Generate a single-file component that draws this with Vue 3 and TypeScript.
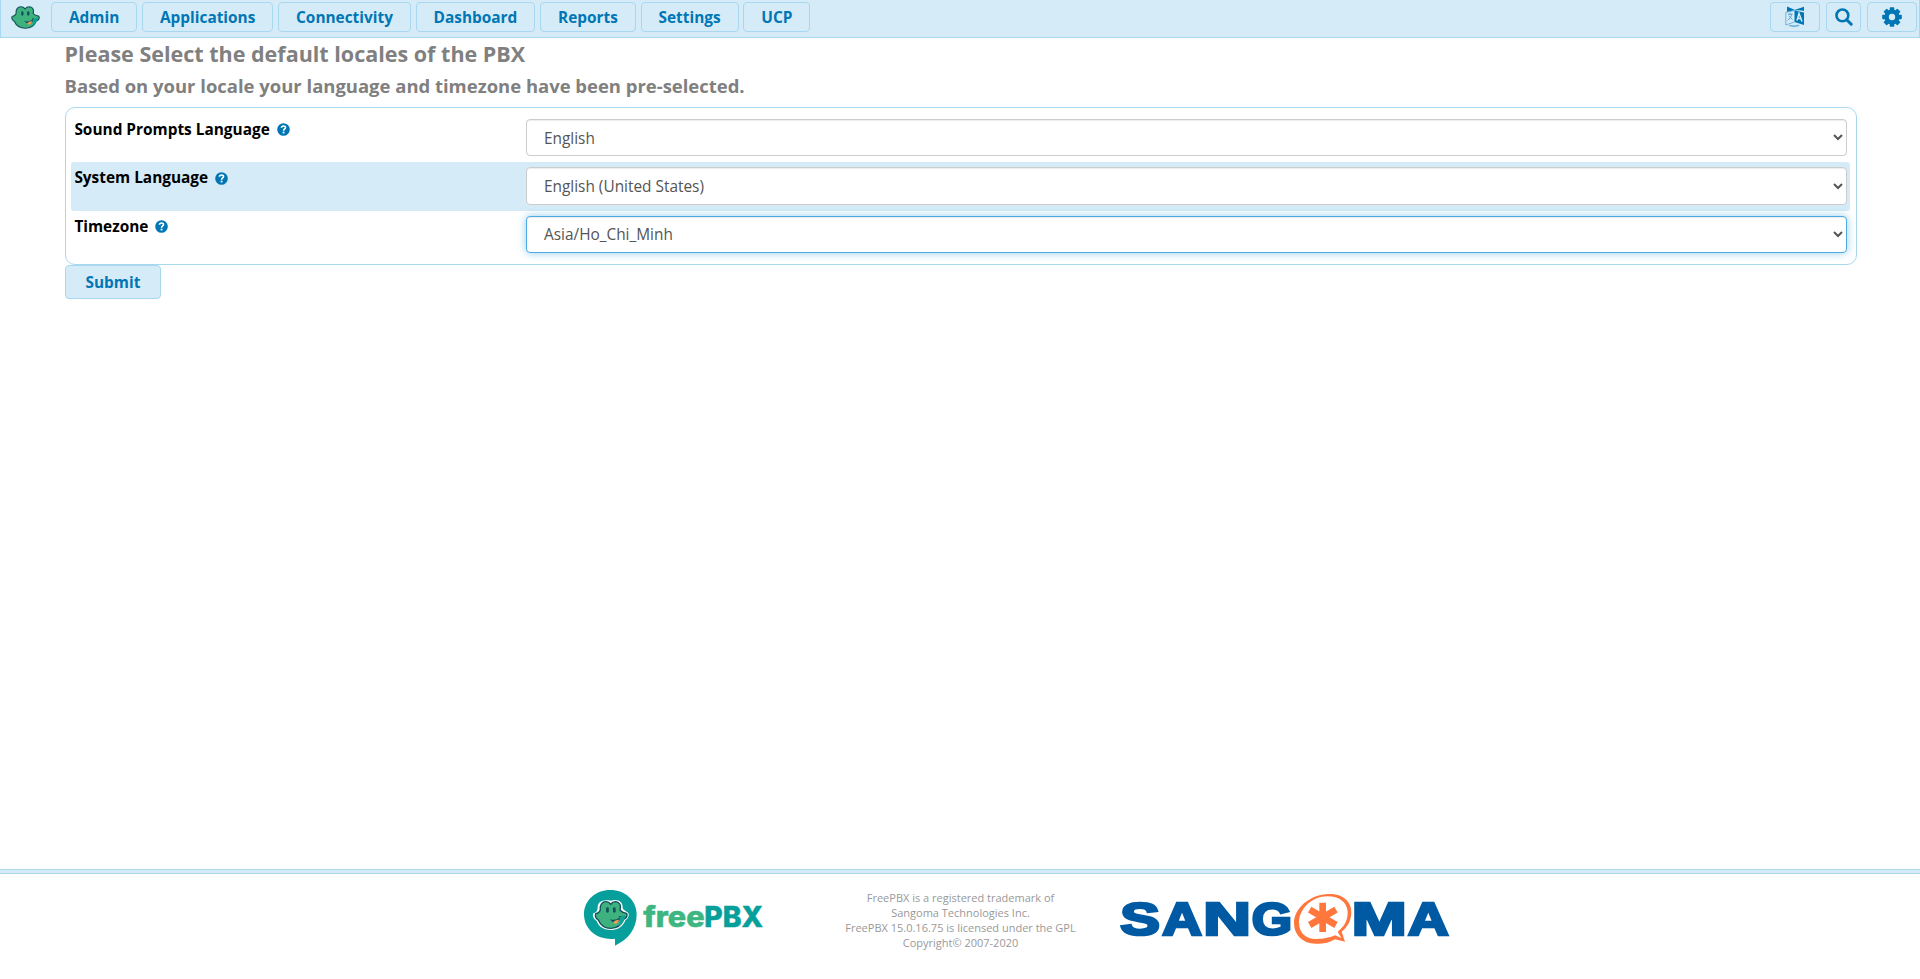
<script setup lang="ts">
import { ref } from 'vue'

interface Field {
  id: string
  label: string
  options: string[]
  focused: boolean
}

const menu: string[] = ['Admin', 'Applications', 'Connectivity', 'Dashboard', 'Reports', 'Settings', 'UCP']

const fields = ref<Field[]>([
  { id: 'sound', label: 'Sound Prompts Language', options: ['English'], focused: false },
  { id: 'system', label: 'System Language', options: ['English (United States)'], focused: false },
  { id: 'timezone', label: 'Timezone', options: ['Asia/Ho_Chi_Minh'], focused: true },
])

const legal: string[] = [
  'FreePBX is a registered trademark of',
  'Sangoma Technologies Inc.',
  'FreePBX 15.0.16.75 is licensed under the GPL',
  'Copyright© 2007-2020',
]
</script>

<template>
  <div class="page">
    <svg class="defs" width="0" height="0" aria-hidden="true">
      <symbol id="frog" viewBox="73 122 101 86">
        <path d="M91 150C89 134 97 125 107 125C115 125 119 128 122 133C125 128 130 125 138 125C149 126 154 137 150 150C156 158 164 159 170 160C173 169 168 175 161 178C155 194 142 205 123 205C103 205 91 195 85 180C77 175 74 169 77 161C84 160 89 156 91 150Z" fill="#3db27e" stroke="#12515c" stroke-width="4" stroke-linejoin="round" />
        <path d="M149 170L165 166C165 178 158 194 145 199C152 190 151 180 149 170Z" fill="#0ea293" />
        <rect x="108.5" y="142" width="8" height="16" rx="4" fill="#12515c" />
        <rect x="129" y="142" width="8" height="16" rx="4" fill="#12515c" />
        <path d="M119 177Q136 184 150 172Q150 187 136 190Q126 187 119 177Z" fill="#12515c" />
        <path d="M129 187Q136 178 147 179Q144 191 135 192Z" fill="#f59a57" />
        <path d="M146 171L153 169" stroke="#12515c" stroke-width="3" />
      </symbol>
    </svg>

    <header class="topbar">
      <svg class="brand" viewBox="73 122 101 86" preserveAspectRatio="none"><use href="#frog" x="73" y="122" width="101" height="86" /></svg>
      <nav class="menu">
        <button v-for="item in menu" :key="item" class="btn">{{ item }}</button>
      </nav>
      <div class="tools">
        <button class="btn tool wide" aria-label="Language">
          <svg width="20" height="22" viewBox="0 0 20 22">
            <path d="M2 .5V6L10 4ZM9.5 4L19 .8V5L17 4.5Z" fill="#0076b5" />
            <path d="M9.5 4.5L19 6.5V19L9.5 16Z" fill="#0076b5" />
            <path d="M.8 6.5L9.5 4.5V16L.8 19Z" fill="#d5ebf7" stroke="#5aa7d2" stroke-width=".8" />
            <path d="M3 8.5L7.5 8M5 6.8V8.2M6.8 8.4Q6 12 2.6 14.5M3.8 10L7.6 13.5" fill="none" stroke="#4d9fce" stroke-width=".9" />
            <path d="M12 14.5L14 7.5L17 15.5M12.8 12.2L15.8 12.8" fill="none" stroke="#d5ebf7" stroke-width="1.5" />
            <path d="M4 19.5Q9 22 14 19.5M4 19.5Q9 20 14 19.5L13 18.5" fill="none" stroke="#5aa7d2" stroke-width=".8" />
          </svg>
        </button>
        <button class="btn tool narrow" aria-label="Search">
          <svg width="18" height="18" viewBox="0 0 18 18">
            <circle cx="7.4" cy="7.4" r="5.9" fill="none" stroke="#0076b5" stroke-width="2.6" />
            <path d="M11.7 11.7L16.2 16.2" stroke="#0076b5" stroke-width="3" stroke-linecap="round" />
          </svg>
        </button>
        <button class="btn tool wide" aria-label="Settings">
          <svg width="20" height="20" viewBox="0 0 20 20">
            <g fill="#0076b5">
              <rect v-for="n in 4" :key="n" x="7.7" y=".2" width="4.6" height="19.6" rx=".7" :transform="`rotate(${n * 45} 10 10)`" />
            </g>
            <circle cx="10" cy="10" r="5.4" fill="none" stroke="#0076b5" stroke-width="4.4" />
            <circle cx="10" cy="10" r="3.2" fill="#d5ebf7" />
          </svg>
        </button>
      </div>
    </header>

    <main class="content">
      <h2 class="title">Please Select the default locales of the PBX</h2>
      <h3 class="subtitle">Based on your locale your language and timezone have been pre-selected.</h3>
      <form class="form" @submit.prevent>
        <div class="panel">
          <div v-for="field in fields" :key="field.id" class="row">
            <div class="label">
              <label :for="field.id">{{ field.label }}</label>
              <svg class="help" width="13" height="13" viewBox="0 0 12 12">
                <circle cx="6" cy="6" r="5.8" fill="#0076b5" />
                <path d="M4.1 4.4C4.3 2.2 7.9 2.3 7.8 4.3C7.7 5.5 6.1 5.5 6.1 7.1" fill="none" stroke="#fff" stroke-width="1.6" />
                <rect x="5.2" y="8" width="1.7" height="1.6" fill="#fff" />
              </svg>
            </div>
            <select :id="field.id" class="control" :class="{ focused: field.focused }">
              <option v-for="option in field.options" :key="option">{{ option }}</option>
            </select>
          </div>
        </div>
        <button class="btn submit">Submit</button>
      </form>
    </main>

    <footer class="footer">
      <div class="rule"></div>
      <div class="credits">
        <svg class="freepbx" viewBox="42 90 537 168">
          <path d="M121 90C165 90 200 121 200 163C200 207 174 239 135 257V236C81 242 42 208 42 163C42 121 77 90 121 90Z" fill="#069f9b" />
          <path d="M83 145C82 125 97 117 123 122C145 116 159 126 158 144C161 153 174 155 176 161C177 172 171 177 166 181C159 199 145 210 124 210C103 210 86 201 80 183C72 178 66 169 70 160C80 158 82 151 83 145Z" fill="#fff" />
          <use href="#frog" x="73" y="122" width="101" height="86" />
          <text x="220" y="200" class="word" font-size="85" textLength="184" lengthAdjust="spacingAndGlyphs" fill="#3db682" stroke="#3db682">free</text>
          <text x="403" y="200" class="word" font-size="85" textLength="176" lengthAdjust="spacingAndGlyphs" fill="#069f9b" stroke="#069f9b">PBX</text>
        </svg>
        <div class="legal">
          <div v-for="line in legal" :key="line">{{ line }}</div>
        </div>
        <svg class="sangoma" viewBox="60 99 993 156">
          <g class="wide-word" fill="#005aa3" stroke="#005aa3">
            <text x="60.5" y="226" textLength="119" lengthAdjust="spacingAndGlyphs">S</text>
            <text x="187" y="226" textLength="119" lengthAdjust="spacingAndGlyphs">A</text>
            <text x="310" y="226" textLength="143" lengthAdjust="spacingAndGlyphs">N</text>
            <text x="455" y="226" textLength="121" lengthAdjust="spacingAndGlyphs">G</text>
            <text x="755" y="226" textLength="165" lengthAdjust="spacingAndGlyphs">M</text>
            <text x="924" y="226" textLength="122" lengthAdjust="spacingAndGlyphs">A</text>
          </g>
          <path fill-rule="evenodd" d="M686 102C728 101 755 124 754 158C753 184 741 202 725 215L735 245L705 238C687 249 668 252 646 251C609 250 583 226 582 191C581 144 631 103 686 102ZM682 109C638 109 597 145 597 189C598 223 622 238 649 237C674 237 691 232 705 226L724 234L713 215C733 200 743 182 743 157C742 126 718 109 682 109Z" fill="#ff773d" />
          <path d="M668 128V216M629 149L708 195M629 195L708 149" fill="none" stroke="#ff773d" stroke-width="20" />
        </svg>
      </div>
    </footer>
  </div>
</template>

<style>
body {
  margin: 0;
  background: #fff;
}
</style>

<style scoped>
.page {
  display: flex;
  flex-direction: column;
  height: 979px;
  overflow: hidden;
  box-sizing: border-box;
  font-family: 'Open Sans', 'Noto Sans', sans-serif;
  font-size: 15.4px;
  color: #000;
}
.page * {
  box-sizing: border-box;
}
.defs {
  display: block;
}
.topbar {
  display: flex;
  align-items: flex-start;
  height: 38px;
  padding: 2px 2px 0 9.5px;
  background: #d5ebf7;
  border: 1px solid #a8d8f0;
  border-top: 0;
}
.brand {
  width: 29px;
  height: 23px;
  margin: 4px 11.5px 0 0;
}
.menu {
  display: flex;
  gap: 4.7px;
}
.tools {
  display: flex;
  gap: 6px;
  margin-left: auto;
}
.btn {
  height: 30px;
  padding: 1px 17px 0;
  font: bold 15.4px/21px 'Open Sans', 'Noto Sans', sans-serif;
  color: #0076b5;
  background: #d5ebf7;
  border: 1px solid #a8d8f0;
  border-radius: 4px;
  white-space: nowrap;
}
.tool {
  display: flex;
  align-items: center;
  justify-content: center;
  padding: 0;
}
.wide {
  width: 50px;
}
.narrow {
  width: 35px;
}
.content {
  flex: 1;
  padding: 0 63px 0 65px;
}
.title,
.subtitle {
  margin: 0 0 0 -0.4px;
  color: #808080;
  font-weight: bold;
}
.title {
  padding-top: 3px;
  font-size: 21.52px;
  line-height: 25px;
}
.subtitle {
  padding-top: 9px;
  font-size: 18.47px;
  line-height: 22px;
}
.form {
  padding-top: 10px;
}
.panel {
  height: 158px;
  padding: 6px 6px 0 5px;
  border: 1px solid #a8d8f0;
  border-radius: 10px;
}
.row {
  display: flex;
  height: 48.4px;
  padding: 5px 3px 0 3.4px;
  border-radius: 3px;
}
.row:nth-child(2) {
  background: #d5ebf7;
}
.label {
  display: flex;
  align-items: center;
  gap: 7px;
  width: 451.6px;
  height: 20.6px;
  font-weight: bold;
}
.help {
  margin-top: 1px;
}
.control {
  flex: 1;
  height: 37.4px;
  padding: 6px 13px;
  font: 15.4px/22px 'Open Sans', 'Noto Sans', sans-serif;
  color: #555;
  background: #fff;
  border: 1px solid #ccc;
  border-radius: 4px;
  box-shadow: inset 0 1px 1px rgba(0, 0, 0, 0.075);
  outline: 0;
}
.row:first-child .control {
  padding-top: 7px;
}
.focused {
  border-color: #4dabe3;
  box-shadow: inset 0 1px 1px rgba(0, 0, 0, 0.075), 0 0 8px rgba(77, 171, 227, 0.6);
}
.submit {
  display: block;
  height: 34px;
  padding: 1px 19.5px 0;
}
.footer {
  height: 110px;
}
.rule {
  height: 5px;
  background: #d5ebf7;
  border: solid #add8e6;
  border-width: 1px 0;
}
.credits {
  display: flex;
  align-items: flex-start;
  padding-left: 584px;
}
.freepbx {
  width: 179px;
  height: 56px;
  margin-top: 16px;
  overflow: visible;
}
.word {
  font-family: Inter, 'Open Sans', sans-serif;
  font-weight: 800;
  stroke-width: 1.5;
}
.legal {
  width: 300px;
  margin: 16px 0 0 47.5px;
  font-size: 11px;
  line-height: 15px;
  color: #999;
  text-align: center;
}
.sangoma {
  width: 331px;
  height: 52px;
  margin: 19px 0 0 9.5px;
  overflow: visible;
}
.wide-word {
  font-family: 'Liberation Sans', Arial, sans-serif;
  font-weight: bold;
  font-size: 137px;
  stroke-width: 8;
}
</style>
